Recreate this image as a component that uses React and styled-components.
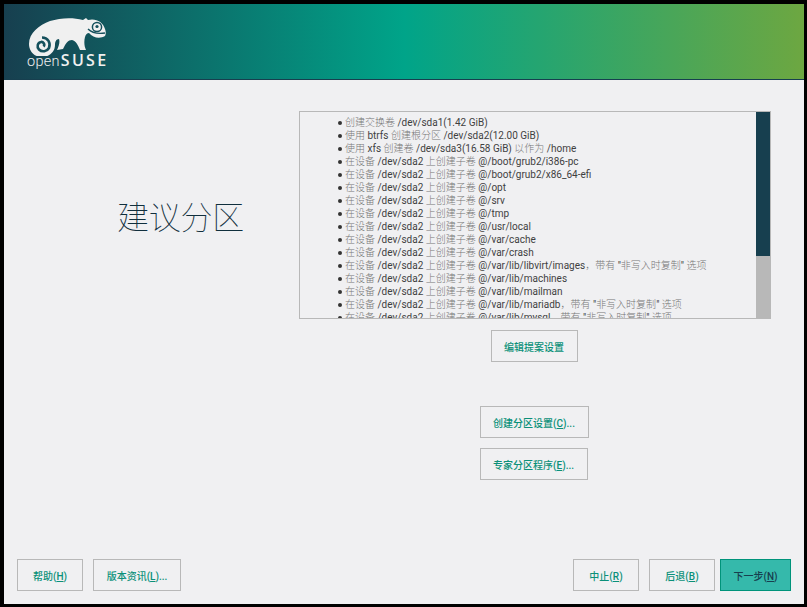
import React from 'react';
import styled, { createGlobalStyle } from 'styled-components';

const GlobalStyle = createGlobalStyle`
  html, body {
    margin: 0;
    padding: 0;
    height: 100%;
    background: #000;
  }
  #root {
    height: 100%;
  }
`;

const Frame = styled.div`
  box-sizing: border-box;
  height: 607px;
  padding: 4px 3px 3px 4px;
  background: #000;
  font-family: Roboto, "Noto Sans CJK SC", sans-serif;
`;

const Window = styled.div`
  display: flex;
  flex-direction: column;
  height: 100%;
  background: #f0f0f2;
`;

const Header = styled.header`
  box-sizing: border-box;
  flex: none;
  height: 76px;
  padding: 11px 0 0 22px;
  background: linear-gradient(90deg, #173f4f 0%, #00a489 50%, #6da741 100%);
  border-bottom: 1px solid #173f4f;
`;

const Logo = styled.div`
  width: 82px;
  display: flex;
  flex-direction: column;
  align-items: flex-start;
`;

const LogoText = styled.div`
  margin: -3px 0 0 1px;
  color: #f0f0f0;
  font-size: 14.5px;
  line-height: 15px;
  font-weight: 300;
  letter-spacing: 0.3px;
  white-space: nowrap;
  b {
    margin-left: 1px;
    font-family: "Open Sans", sans-serif;
    font-weight: 600;
    font-size: 16px;
    letter-spacing: 2.3px;
  }
`;

const Content = styled.main`
  flex: 1;
  display: grid;
  grid-template-columns: 295px 472px;
  padding-top: 31px;
`;

const TitleColumn = styled.div`
  display: flex;
  justify-content: center;
  padding: 81px 2px 0 60px;
  box-sizing: border-box;
`;

const Title = styled.h1`
  margin: 0;
  color: #102f3d;
  font-family: "Noto Sans CJK SC", sans-serif;
  font-size: 32px;
  line-height: 46px;
  font-weight: 100;
  letter-spacing: -0.3px;
`;

const Proposal = styled.div`
  display: flex;
  flex-direction: column;
  align-items: center;
`;

const SummaryBox = styled.div`
  box-sizing: border-box;
  align-self: stretch;
  height: 208px;
  display: flex;
  border: 1px solid #b8b8b8;
  border-right: none;
  overflow: hidden;
`;

const SummaryList = styled.ul`
  flex: 1;
  margin: 0;
  padding: 4px 0 0 38px;
  list-style: none;
  color: #3f3f3f;
  font-size: 10px;
  line-height: 13px;
  white-space: nowrap;
  overflow: hidden;
`;

const SummaryItem = styled.li`
  display: flex;
  align-items: center;
  white-space: pre;
  &::before {
    content: "";
    flex: none;
    width: 4px;
    height: 4px;
    margin-right: 3px;
    border-radius: 50%;
    background: #333;
  }
`;

const CjkRun = styled.span`
  color: #777;
  font-weight: 300;
`;

const Scrollbar = styled.div`
  flex: none;
  width: 15px;
  background: #b8b8b8;
`;

const ScrollThumb = styled.div`
  width: 14px;
  height: 144px;
  background: #173f4f;
`;

const Button = styled.button`
  box-sizing: border-box;
  width: ${(p) => p.$w}px;
  height: 32px;
  padding: 0;
  background: ${(p) => (p.$primary ? '#35b9ab' : 'transparent')};
  border: 1px solid ${(p) => (p.$primary ? '#00937a' : '#b8b8b8')};
  color: ${(p) => (p.$primary ? '#173f4f' : '#0b9079')};
  font-family: Roboto, "Noto Sans CJK SC", sans-serif;
  font-size: 10px;
  font-weight: 500;
  u {
    text-underline-offset: 1px;
  }
`;

const EditButton = styled(Button)`
  margin: 11px 2px 0 0;
`;

const PartitionActions = styled.div`
  display: flex;
  flex-direction: column;
  align-items: flex-start;
  gap: 10px;
  margin: 44px 2px 0 0;
`;

const Footer = styled.footer`
  flex: none;
  display: flex;
  align-items: center;
  padding: 0 13px 13px 13px;
`;

const FooterGroup = styled.div`
  display: flex;
  gap: 10px;
`;

const Spacer = styled.div`
  flex: 1;
`;

const BackGroup = styled.div`
  display: flex;
  gap: 10px;
  margin-right: 5px;
`;

const items = [
  '创建交换卷 /dev/sda1(1.42 GiB)',
  '使用 btrfs 创建根分区 /dev/sda2(12.00 GiB)',
  '使用 xfs 创建卷 /dev/sda3(16.58 GiB) 以作为 /home',
  '在设备 /dev/sda2 上创建子卷 @/boot/grub2/i386-pc',
  '在设备 /dev/sda2 上创建子卷 @/boot/grub2/x86_64-efi',
  '在设备 /dev/sda2 上创建子卷 @/opt',
  '在设备 /dev/sda2 上创建子卷 @/srv',
  '在设备 /dev/sda2 上创建子卷 @/tmp',
  '在设备 /dev/sda2 上创建子卷 @/usr/local',
  '在设备 /dev/sda2 上创建子卷 @/var/cache',
  '在设备 /dev/sda2 上创建子卷 @/var/crash',
  '在设备 /dev/sda2 上创建子卷 @/var/lib/libvirt/images，带有 "非写入时复制" 选项',
  '在设备 /dev/sda2 上创建子卷 @/var/lib/machines',
  '在设备 /dev/sda2 上创建子卷 @/var/lib/mailman',
  '在设备 /dev/sda2 上创建子卷 @/var/lib/mariadb，带有 "非写入时复制" 选项',
  '在设备 /dev/sda2 上创建子卷 @/var/lib/mysql，带有 "非写入时复制" 选项',
];

// the chinese runs are visibly lighter than the latin paths in the list
function itemParts(text) {
  return text
    .split(/([\u4e00-\u9fff，]+)/)
    .map((part, i) => (i % 2 ? <CjkRun key={i}>{part}</CjkRun> : part));
}

function GeekoIcon() {
  return (
    <svg width="82" height="41" viewBox="26 15 82 41">
      <path
        fill="#f0f0f0"
        d="M29 44C29 33 39 25 50 21C60 18 72 17 83 20L86 18L88 20C96 18 103 22 105 29C106 32 106 34 105 36C100 39 93 38 89 33C87 33 86 34 85 37C84 41 84 46 86 50L80 50C78 45 76 41 72 40C68 40 66 43 63 49L57 50C59 46 60 42 59 39C56 39 55 42 55 45C55 52 49 57 42 57C34 57 29 51 29 44Z"
      />
      <path
        fill="none"
        stroke="#15505c"
        strokeWidth="2.6"
        d="M43.5 46.5C45.5 44.5 43 41.5 41 42C37.5 42.5 36.5 47 39 49.5C42 52.5 47 51.5 49 48C51 43 48 37.5 42 37.5"
      />
      <circle cx="97" cy="27" r="4.6" fill="none" stroke="#15505c" strokeWidth="1.5" />
      <circle cx="97" cy="26.5" r="1.6" fill="#15505c" />
      <path fill="none" stroke="#15505c" strokeWidth="1.4" d="M88 29C92 33 98 34 105 33" />
    </svg>
  );
}

export default function App() {
  return (
    <>
      <GlobalStyle />
      <Frame>
        <Window>
          <Header>
            <Logo>
              <GeekoIcon />
              <LogoText>
                open<b>SUSE</b>
              </LogoText>
            </Logo>
          </Header>
          <Content>
            <TitleColumn>
              <Title>建议分区</Title>
            </TitleColumn>
            <Proposal>
              <SummaryBox>
                <SummaryList>
                  {items.map((item) => (
                    <SummaryItem key={item}>
                      <span>{itemParts(item)}</span>
                    </SummaryItem>
                  ))}
                </SummaryList>
                <Scrollbar>
                  <ScrollThumb />
                </Scrollbar>
              </SummaryBox>
              <EditButton $w={87}>编辑提案设置</EditButton>
              <PartitionActions>
                <Button $w={109}>
                  创建分区设置(<u>C</u>)...
                </Button>
                <Button $w={108}>
                  专家分区程序(<u>E</u>)...
                </Button>
              </PartitionActions>
            </Proposal>
          </Content>
          <Footer>
            <FooterGroup>
              <Button $w={66}>
                帮助(<u>H</u>)
              </Button>
              <Button $w={88}>
                版本资讯(<u>L</u>)...
              </Button>
            </FooterGroup>
            <Spacer />
            <BackGroup>
              <Button $w={66}>
                中止(<u>R</u>)
              </Button>
              <Button $w={66}>
                后退(<u>B</u>)
              </Button>
            </BackGroup>
            <Button $w={71} $primary>
              下一步(<u>N</u>)
            </Button>
          </Footer>
        </Window>
      </Frame>
    </>
  );
}
